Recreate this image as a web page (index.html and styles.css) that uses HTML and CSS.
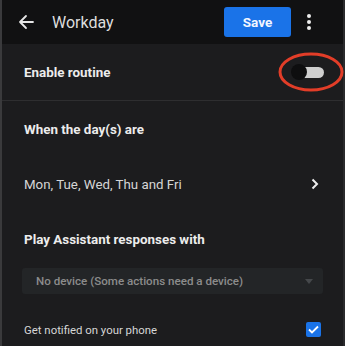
FILE: index.html
```html
<!DOCTYPE html>
<html>
<head>
<meta charset="utf-8">
<link rel="stylesheet" href="styles.css">
</head>
<body>
<div class="frame">
  <header class="topbar">
    <svg class="back" width="16" height="16" viewBox="0 0 16 16"><path d="M15 8H2M8 2L2 8l6 6" fill="none" stroke="#e6e6e6" stroke-width="1.8" stroke-linecap="round" stroke-linejoin="round"/></svg>
    <span class="title">Workday</span>
    <button class="save">Save</button>
    <svg class="kebab" width="6" height="18" viewBox="0 0 6 18"><circle cx="3" cy="3" r="2" fill="#eee"/><circle cx="3" cy="9" r="2" fill="#eee"/><circle cx="3" cy="15" r="2" fill="#eee"/></svg>
  </header>
  <div class="row enable">
    <span class="heading">Enable routine</span>
    <span class="toggle"><span class="track"></span><span class="thumb"></span></span>
    <svg class="ring" width="68" height="42" viewBox="0 0 68 42"><ellipse cx="35" cy="21" rx="31" ry="18" fill="none" stroke="#e23d28" stroke-width="3"/></svg>
  </div>
  <div class="section-title"><span class="heading">When the day(s) are</span></div>
  <div class="row days">
    <span class="text">Mon, Tue, Wed, Thu and Fri</span>
    <svg class="chev" width="8" height="12" viewBox="0 0 8 12"><path d="M1.5 1.5L6 6l-4.5 4.5" fill="none" stroke="#eee" stroke-width="2"/></svg>
  </div>
  <div class="section-title"><span class="heading">Play Assistant responses with</span></div>
  <div class="select">
    <span class="select-text">No device (Some actions need a device)</span>
    <svg width="8" height="5" viewBox="0 0 8 5"><path d="M0 0h8L4 5z" fill="#45484b"/></svg>
  </div>
  <div class="row notify">
    <span class="small">Get notified on your phone</span>
    <span class="check"><svg width="11" height="9" viewBox="0 0 11 9"><path d="M1 4.5l3 3 6-6" fill="none" stroke="#fff" stroke-width="1.8"/></svg></span>
  </div>
</div>
</body>
</html>
```
FILE: styles.css
```css
html, body {
  margin: 0;
  padding: 0;
  background: #1c1c1e;
}
body {
  width: 345px;
  height: 346px;
  overflow: hidden;
  font-family: Roboto, "Liberation Sans", sans-serif;
}
.frame {
  box-sizing: border-box;
  width: 345px;
  height: 346px;
  border-left: 2px solid #3a3a3c;
  border-right: 2px solid #2a2a2c;
  background: #1c1c1e;
}
.topbar {
  height: 44px;
  background: #111112;
  display: flex;
  align-items: center;
  padding-left: 16px;
  padding-right: 31px;
}
.back { flex: none; }
.title {
  margin-left: 18px;
  color: #dedede;
  font-size: 16px;
  flex: 1;
}
.save {
  width: 67px;
  height: 30px;
  border: none;
  border-radius: 3px;
  background: #1a73e8;
  color: #f2f6ff;
  font-family: Roboto, "Liberation Sans", sans-serif;
  font-weight: 700;
  font-size: 13.5px;
  padding: 0;
}
.kebab { margin-left: 15px; }
.row {
  display: flex;
  align-items: center;
  padding: 0 22px;
  position: relative;
}
.heading {
  color: #ececec;
  font-weight: 700;
  font-size: 13.4px;
}
.enable {
  height: 56px;
  border-bottom: 1px solid #2e2e30;
  justify-content: space-between;
}
.toggle {
  position: relative;
  width: 33px;
  height: 16px;
  margin-right: -3px;
}
.track {
  position: absolute;
  right: 0;
  top: 3px;
  width: 26px;
  height: 11px;
  border-radius: 6px;
  background: #cfcfcf;
}
.thumb {
  position: absolute;
  left: 0;
  top: 0;
  width: 16px;
  height: 16px;
  border-radius: 50%;
  background: #0e0e0f;
}
.ring {
  position: absolute;
  left: 274px;
  top: 7px;
}
.section-title {
  height: 56px;
  display: flex;
  align-items: center;
  padding: 0 22px;
}
.days {
  height: 54px;
  justify-content: space-between;
}
.text {
  color: #d6d6d6;
  font-size: 13.3px;
}
.chev { margin-right: 2px; }
.select {
  margin: 1px 20px 0 20px;
  height: 26px;
  background: #232527;
  border-radius: 3px;
  display: flex;
  align-items: center;
  justify-content: space-between;
  padding: 0 10px 0 14px;
}
.select-text {
  color: #8c8c8c;
  font-size: 11.6px;
  font-weight: 500;
}
.notify {
  padding-top: 28px;
  justify-content: space-between;
  padding-right: 22px;
}
.small {
  color: #d6d6d6;
  font-size: 11.4px;
}
.check {
  width: 15px;
  height: 15px;
  border-radius: 2px;
  background: #1a73e8;
  display: flex;
  align-items: center;
  justify-content: center;
}
```
